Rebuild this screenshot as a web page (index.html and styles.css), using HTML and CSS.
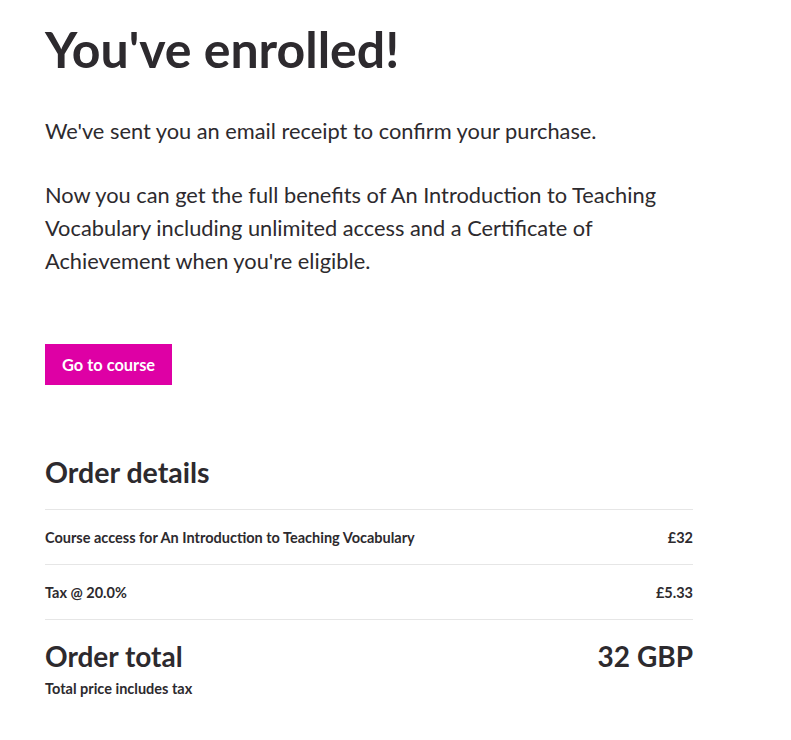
FILE: index.html
```html
<!DOCTYPE html>
<html lang="en">
<head>
    <meta charset="UTF-8">
    <meta name="viewport" content="width=device-width, initial-scale=1.0">
    <title>You've enrolled</title>
    <link rel="stylesheet" href="styles.css">
</head>
<body>
    <div class="container">
        <h1 class="page-title">You've enrolled!</h1>

        <div class="intro">
            <p>We've sent you an email receipt to confirm your purchase.</p>
            <p>Now you can get the full benefits of An Introduction to Teaching Vocabulary including unlimited access and a Certificate of Achievement when you're eligible.</p>
        </div>

        <a class="btn-primary" href="#">Go to course</a>

        <div class="order">
            <h2 class="order-title">Order details</h2>
            <div class="order-row">
                <span>Course access for An Introduction to Teaching Vocabulary</span>
                <span>£32</span>
            </div>
            <div class="order-row">
                <span>Tax @ 20.0%</span>
                <span>£5.33</span>
            </div>
            <div class="order-total">
                <div class="total-line">
                    <span>Order total</span>
                    <span>32 GBP</span>
                </div>
                <div class="total-note">Total price includes tax</div>
            </div>
        </div>
    </div>
</body>
</html>
```

FILE: styles.css
```css
body {
    margin: 0;
    font-family: Lato, "Noto Sans", sans-serif;
    color: #2d2a2e;
    background: #fff;
}
.container {
    width: 648px;
    padding: 21px 45px 0;
}
.page-title {
    margin: 0;
    font-size: 50px;
    line-height: 56px;
    font-weight: 700;
}
.intro {
    margin-top: 37px;
    font-size: 21.8px;
    line-height: 33px;
}
.intro p {
    margin: 0 0 31px;
}
.btn-primary {
    display: inline-block;
    margin-top: 36px;
    padding: 0 17px;
    height: 41px;
    line-height: 41px;
    background: #de00a5;
    color: #fff;
    font-size: 16.4px;
    font-weight: 700;
    text-decoration: none;
}
.order {
    margin-top: 70px;
}
.order-title {
    margin: 0;
    font-size: 28.5px;
    line-height: 34px;
    font-weight: 700;
    padding-bottom: 20px;
}
.order-row {
    display: flex;
    justify-content: space-between;
    align-items: center;
    height: 54px;
    border-top: 1px solid #e6e6e6;
    font-size: 14.5px;
    font-weight: 700;
}
.order-total {
    border-top: 1px solid #e6e6e6;
    padding-top: 20px;
}
.total-line {
    display: flex;
    justify-content: space-between;
    font-size: 28px;
    line-height: 32px;
    font-weight: 700;
}
.total-note {
    margin-top: 8px;
    font-size: 14.5px;
    font-weight: 700;
}
```
